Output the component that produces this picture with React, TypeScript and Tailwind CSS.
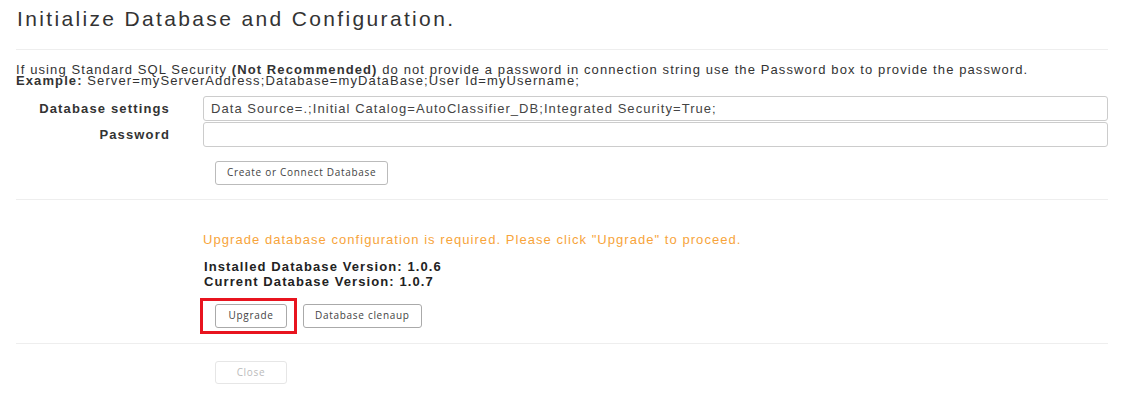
export default function App() {
  return (
    <div className="min-h-[400px] w-[1130px] bg-white text-[#333] font-['Liberation_Sans',Arial,sans-serif]">
      <div className="pl-[16px] pr-[22px]">
        <h1 className="pt-[6px] pl-[1px] text-[21px] leading-[26px] tracking-[2.35px]">Initialize Database and Configuration.</h1>
        <hr className="mt-[17px] border-[#eee]" />

        <p className="mt-[14px] text-[13px] leading-[11px] tracking-[1.1px]">
          If using Standard SQL Security <b>(Not Recommended)</b> do not provide a password in connection string use the Password box to provide the password.
          <br />
          <b>Example:</b> Server=myServerAddress;Database=myDataBase;User Id=myUsername;
        </p>

        <div className="mt-[10px] flex flex-col gap-[1px]">
          <div className="flex items-center">
            <label className="w-[154px] text-right text-[13px] font-bold tracking-[1.15px]">Database settings</label>
            <input
              className="ml-[33px] h-[25px] flex-1 rounded-[3px] border border-[#ccc] px-[7px] text-[13px] tracking-[1.05px] text-[#444] outline-none font-['Liberation_Sans',Arial,sans-serif]"
              defaultValue="Data Source=.;Initial Catalog=AutoClassifier_DB;Integrated Security=True;"
            />
          </div>
          <div className="flex items-center">
            <label className="w-[154px] text-right text-[13px] font-bold tracking-[1.15px]">Password</label>
            <input type="password" className="ml-[33px] h-[25px] flex-1 rounded-[3px] border border-[#ccc] px-[7px] text-[13px] outline-none" />
          </div>
        </div>

        <div className="mt-[12px] pl-[199px]">
          <button className="h-[24px] rounded-[3px] border border-[#bbb] bg-white px-[11px] text-[10px] tracking-[0.7px] text-[#444] font-['Open_Sans',sans-serif]">
            Create or Connect Database
          </button>
        </div>

        <hr className="mt-[14px] border-[#eee]" />

        <div className="pl-[184px]">
          <p className="mt-[32px] pl-[3px] text-[13px] leading-[16px] text-[#f7a43b] tracking-[1.05px]">
            Upgrade database configuration is required. Please click "Upgrade" to proceed.
          </p>
          <div className="mt-[11px] pl-[4px] text-[13px] font-bold leading-[15px] tracking-[1.1px] text-[#222]">
            <div>Installed Database Version: 1.0.6</div>
            <div>Current Database Version: 1.0.7</div>
          </div>
          <div className="mt-[9px] flex items-center gap-[6px]">
            <div className="border-[3px] border-[#e8141f] pl-[12px] pr-[7px] py-[3px]">
              <button className="block h-[24px] w-[72px] rounded-[3px] border border-[#aaa] bg-white text-[10px] tracking-[0.7px] text-[#444] font-['Open_Sans',sans-serif]">
                Upgrade
              </button>
            </div>
            <button className="h-[24px] rounded-[3px] border border-[#aaa] bg-white px-[11px] text-[10px] tracking-[0.7px] text-[#444] font-['Open_Sans',sans-serif]">
              Database clenaup
            </button>
          </div>
        </div>

        <hr className="mt-[9px] border-[#eee]" />

        <div className="mt-[15px] pl-[199px]">
          <button className="h-[23px] w-[72px] rounded-[3px] border border-[#e6e6e6] bg-white text-[10px] tracking-[0.7px] text-[#bbb] font-['Open_Sans',sans-serif]">
            Close
          </button>
        </div>
      </div>
    </div>
  )
}
